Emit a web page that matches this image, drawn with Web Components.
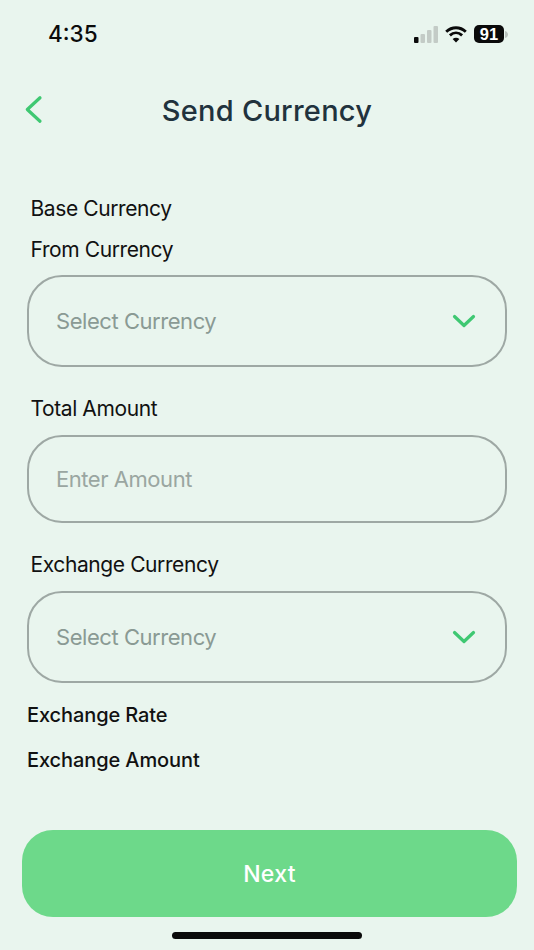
<!DOCTYPE html>
<html lang="en"><head><meta charset="utf-8"><title>Send Currency</title>
<style>
html,body{margin:0;padding:0;background:#e9f5ee;}
body{width:534px;height:950px;overflow:hidden;font-family:Inter,"Liberation Sans",sans-serif;}
</style></head><body>
<send-screen></send-screen>
<script>
function def(name,css,html){
  customElements.define(name,class extends HTMLElement{
    constructor(){super();const r=this.attachShadow({mode:'open'});r.innerHTML='<style>'+css+'</style>'+(typeof html==='function'?html(this):html);}
  });
}
const chevron='<svg width="24" height="14" viewBox="0 0 24 14" fill="none"><path d="M2.500 2.500 12 11.500 21.500 2.500" stroke="#3fc872" stroke-width="3.200" stroke-linecap="round" stroke-linejoin="round"/></svg>';

def('status-bar',`:host{display:flex;align-items:center;justify-content:space-between;height:68px;padding:0 25px 0 48px;box-sizing:border-box;color:#0b0b0b}
.t{font:500 22.500px/1 Inter,"Liberation Sans",sans-serif;letter-spacing:0}
.r{display:flex;align-items:center;gap:7px}
.b{display:flex;align-items:center}
.pill{background:#0a0a0a;color:#fff;border-radius:5px;width:30px;height:18px;display:flex;align-items:center;justify-content:center;font:700 16.500px/1 "Liberation Sans",sans-serif}
`,`<span class="t">4:35</span><span class="r">
<svg width="24" height="17" viewBox="0 0 24 17"><rect x="0" y="11" width="4.500" height="6" rx="1" fill="#0a0a0a"/><rect x="6.500" y="8" width="4.500" height="9" rx="1" fill="#c3cbc6"/><rect x="13" y="4" width="4.500" height="13" rx="1" fill="#c3cbc6"/><rect x="19.500" y="0" width="4.500" height="17" rx="1" fill="#c3cbc6"/></svg>
<svg width="22" height="17" viewBox="0 0 22 17" fill="none" stroke="#0a0a0a" stroke-width="2.900" stroke-linecap="butt"><path d="M1.200 5.800C7 .4 15 .4 20.800 5.800"/><path d="M4.900 9.400C8.600 6 13.400 6 17.100 9.400"/><path d="M11 16.600 7.600 12.900C9.600 11.200 12.400 11.200 14.400 12.900Z" fill="#0a0a0a" stroke="none"/></svg>
<span class="b"><span class="pill">91</span><svg width="4" height="7" viewBox="0 0 4 7" style="margin-left:1px"><path d="M0 0c2 .5 3 2 3 3.500S2 6.500 0 7Z" fill="#b9c2bd"/></svg></span>
</span>`);

def('app-header',`:host{display:flex;align-items:center;justify-content:center;position:relative;height:84px;padding-top:1px;box-sizing:border-box;color:#21323d}
h1{margin:0;font:450 29px/1 Inter,"Liberation Sans",sans-serif;letter-spacing:.25px}
svg{position:absolute;left:24px;top:27px}
`,`<svg width="19" height="29" viewBox="0 0 19 29" fill="none"><path d="M16 2.800 3.300 14.500 16 26.200" stroke="#3fc872" stroke-width="3.200" stroke-linecap="round" stroke-linejoin="round"/></svg><h1>Send Currency</h1>`);

def('field-label',`:host{display:block;font:400 21px/28px Inter,"Liberation Sans",sans-serif;letter-spacing:-.4px;color:#111;padding-left:30.500px}`,`<slot></slot>`);

def('form-box',`:host{display:flex;align-items:center;justify-content:space-between;box-sizing:border-box;margin:0 27px;height:92px;border:2px solid #9ea8a4;border-radius:35px;padding:0 29px 0 27px;font:400 22px/1 Inter,"Liberation Sans",sans-serif;letter-spacing:-.45px;color:#8a9a94}
:host([amount]){height:88px;color:#9aa6a1}
.c{display:flex}`,el=>`<slot></slot><span class="c">${el.hasAttribute('amount')?'':chevron}</span>`);

def('info-line',`:host{display:block;font:500 20px/28px Inter,"Liberation Sans",sans-serif;color:#111;padding-left:27px;letter-spacing:-.1px}`,`<slot></slot>`);

def('next-button',`:host{display:flex;align-items:center;justify-content:center;margin:0 17px 0 22px;height:87px;padding-top:2px;box-sizing:border-box;border-radius:31px;background:#6dd98a;color:#fff;font:500 23px/1 Inter,"Liberation Sans",sans-serif;letter-spacing:.3px}`,`<slot></slot>`);

def('home-bar',`:host{display:block;width:190px;height:7px;background:#0a0a0a;border-radius:4px;margin:15px auto 0}`,``);

def('send-screen',`:host{display:flex;flex-direction:column;width:534px;height:950px;background:#e9f5ee}
.l1{margin-top:43px}.l2{margin-top:13px;margin-bottom:11px}.l3{margin-top:28px;margin-bottom:12px}.l4{margin-top:28px;margin-bottom:12px}
.i1{margin-top:18px}.i2{margin-top:17px}
next-button{margin-top:56px}`,
`<status-bar></status-bar><app-header></app-header>
<field-label class="l1">Base Currency</field-label>
<field-label class="l2">From Currency</field-label>
<form-box>Select Currency</form-box>
<field-label class="l3">Total Amount</field-label>
<form-box amount>Enter Amount</form-box>
<field-label class="l4">Exchange Currency</field-label>
<form-box>Select Currency</form-box>
<info-line class="i1">Exchange Rate</info-line>
<info-line class="i2">Exchange Amount</info-line>
<next-button>Next</next-button>
<home-bar></home-bar>`);
</script></body></html>
